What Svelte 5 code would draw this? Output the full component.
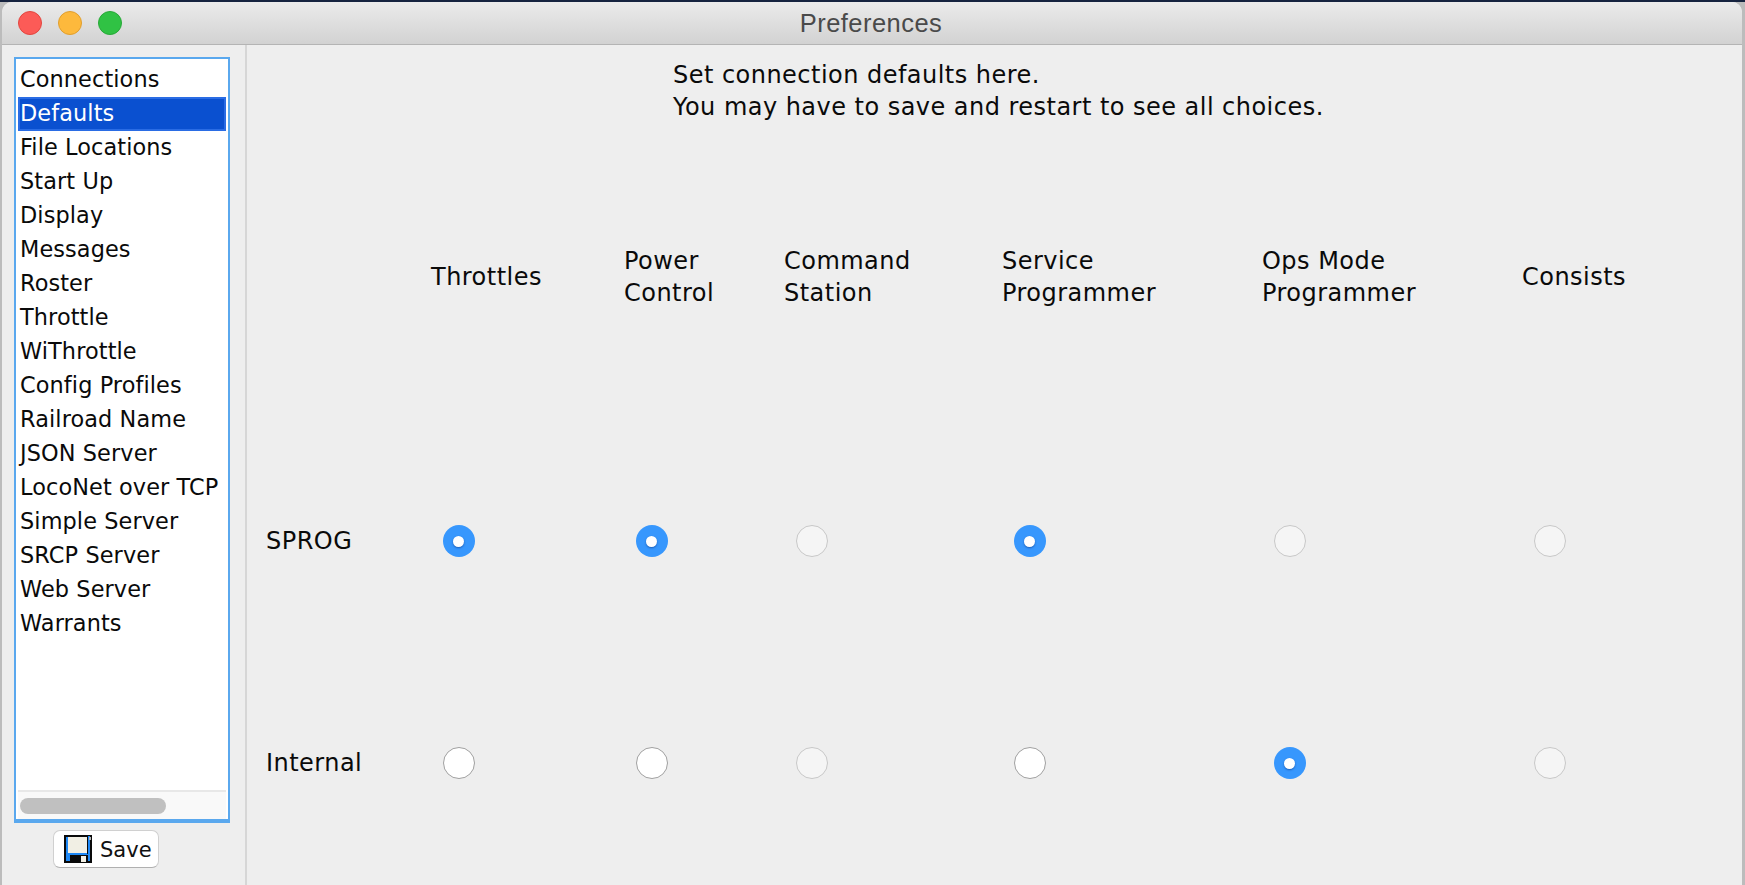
<script>
  const items = ['Connections','Defaults','File Locations','Start Up','Display','Messages','Roster','Throttle','WiThrottle','Config Profiles','Railroad Name','JSON Server','LocoNet over TCP','Simple Server','SRCP Server','Web Server','Warrants'];
  const cols = [['Throttles'],['Power','Control'],['Command','Station'],['Service','Programmer'],['Ops Mode','Programmer'],['Consists']];
  const rows = [
    { name: 'SPROG', v: ['on','on','dis','on','dis','dis'] },
    { name: 'Internal', v: ['off','off','dis','off','on','dis'] }
  ];
</script>

<div class="desk">
  <div class="win">
    <header class="bar">
      <div class="lights">
        <span class="l red"></span><span class="l yel"></span><span class="l grn"></span>
      </div>
      <div class="title">Preferences</div>
    </header>
    <div class="body">
      <aside class="side">
        <div class="listbox">
          <ul class="list">
            {#each items as it, i}
              <li class:sel={i === 1}>{it}</li>
            {/each}
          </ul>
          <div class="track"><div class="thumb"></div></div>
        </div>
        <button class="save">
          <svg width="28" height="28" viewBox="0 0 28 28" shape-rendering="crispEdges">
            <rect width="28" height="28" fill="#0a0a0a"/>
            <rect x="2" y="1" width="24" height="25" fill="#1e88f5"/>
            <rect x="2" y="1" width="22" height="1" fill="#0a0a0a"/>
            <rect x="4" y="2" width="19" height="16" fill="#f1efe4"/>
            <rect x="23" y="1" width="1" height="18" fill="#0a0a0a"/>
            <rect x="25" y="2" width="2" height="3" fill="#b5b5b5"/>
            <rect x="6" y="20" width="18" height="8" fill="#0a0a0a"/>
            <rect x="17" y="21" width="5" height="6" fill="#f1efe4"/>
          </svg>
          <span>Save</span>
        </button>
      </aside>
      <main class="pane">
        <div class="intro">
          <div>Set connection defaults here.</div>
          <div>You may have to save and restart to see all choices.</div>
        </div>
        <div class="grid">
          <div class="lab"></div>
          {#each cols as c}
            <div class="head">{#each c as line}<div>{line}</div>{/each}</div>
          {/each}
          {#each rows as r}
            <div class="lab">{r.name}</div>
            {#each r.v as s}
              <div class="cell"><span class="radio {s}"></span></div>
            {/each}
          {/each}
        </div>
      </main>
    </div>
  </div>
</div>

<style>
  :global(body) { margin: 0; background: #cfcfcf; }
  .desk { width: 1745px; height: 885px; overflow: hidden; box-sizing: border-box; padding: 2px 3px 0 2px; background: linear-gradient(#16233f 0 2px, #bcbcbc 2px); }
  .win { height: 883px; background: #eeeeee; border-radius: 10px 10px 0 0; display: flex; flex-direction: column; font-family: "DejaVu Sans", sans-serif; color: #0a0a0a; overflow: hidden; }
  .bar { height: 42px; flex: none; position: relative; display: flex; align-items: center; justify-content: center; background: linear-gradient(#ebebeb, #d2d2d2); border-bottom: 1px solid #b4b4b4; }
  .lights { position: absolute; left: 16px; top: 9px; display: flex; gap: 16px; }
  .l { width: 22px; height: 22px; border-radius: 50%; border: 1px solid; display: block; }
  .red { background: #fc5b57; border-color: #e2463f; }
  .yel { background: #fdb93c; border-color: #e09e2e; }
  .grn { background: #30c244; border-color: #28a838; }
  .title { font-size: 25.5px; color: #4a4a4a; font-family: "Liberation Sans", sans-serif; margin: 1px 0 0 -2px; letter-spacing: .45px; }
  .body { flex: 1; display: flex; min-height: 0; }
  .side { width: 231px; flex: none; border-right: 2px solid #d6d6d6; padding: 12px 0 0 12px; box-sizing: content-box; display: flex; flex-direction: column; }
  .listbox { width: 216px; height: 766px; flex: none; box-sizing: border-box; border: 2px solid #5aa8ee; border-bottom-width: 4px; background: #fff; display: flex; flex-direction: column; }
  .list { list-style: none; margin: 0; padding: 0; flex: 1; padding-top: 4px; padding-left: 2px; }
  .list li { height: 34px; line-height: 33px; font-size: 22.4px; padding-left: 2px; white-space: nowrap; box-sizing: border-box; width: 208px; overflow: visible; letter-spacing: .1px; }
  .list li.sel { background: #0a50d0; color: #fff; border: 2px solid #2a6ce4; line-height: 29px; padding-left: 0; }
  .track { height: 29px; flex: none; margin: 0 2px 0 2px; background: #f9f9f9; border-top: 2px solid #e8e8e8; box-sizing: border-box; padding: 6px 0 0 2px; }
  .thumb { width: 146px; height: 16px; border-radius: 8px; background: #c0c0c0; }
  .save { align-self: flex-start; margin: 7px 0 0 39px; width: 106px; height: 38px; display: flex; align-items: center; gap: 8px; padding: 0 0 0 10px; background: #fff; border: 1px solid #d0d0d0; border-bottom-color: #b0b0b0; border-radius: 7px; font: 21px "DejaVu Sans", sans-serif; color: #111; box-sizing: border-box; }
  .save span { margin-top: 2px; }
  .pane { flex: 1; min-width: 0; font-size: 24px; letter-spacing: .47px; }
  .intro { padding: 14px 0 0 426px; line-height: 32px; height: 64px; }
  .grid { display: grid; grid-template-columns: 165px 193px 160px 218px 260px 260px 200px; grid-template-rows: 106px 64px 64px; margin-top: 122px; padding-left: 19px; row-gap: 158px; }
  .head { line-height: 32px; height: 64px; display: flex; flex-direction: column; justify-content: center; white-space: nowrap; }
  .lab { align-self: center; white-space: nowrap; }
  .cell { display: flex; align-items: center; padding-left: 11.5px; }
  .radio { width: 32px; height: 32px; border-radius: 50%; box-sizing: border-box; position: relative; display: block; }
  .on { background: #3797fd; }
  .on::after { content: ""; position: absolute; left: 10.5px; top: 10.5px; width: 11px; height: 11px; background: #fff; border-radius: 50%; box-shadow: 0 1px 2px rgba(0,40,120,.5); }
  .off { background: #fff; border: 1.5px solid #a0a0a0; }
  .dis { background: #f5f5f5; border: 1.5px solid #c8c8c8; }
</style>
